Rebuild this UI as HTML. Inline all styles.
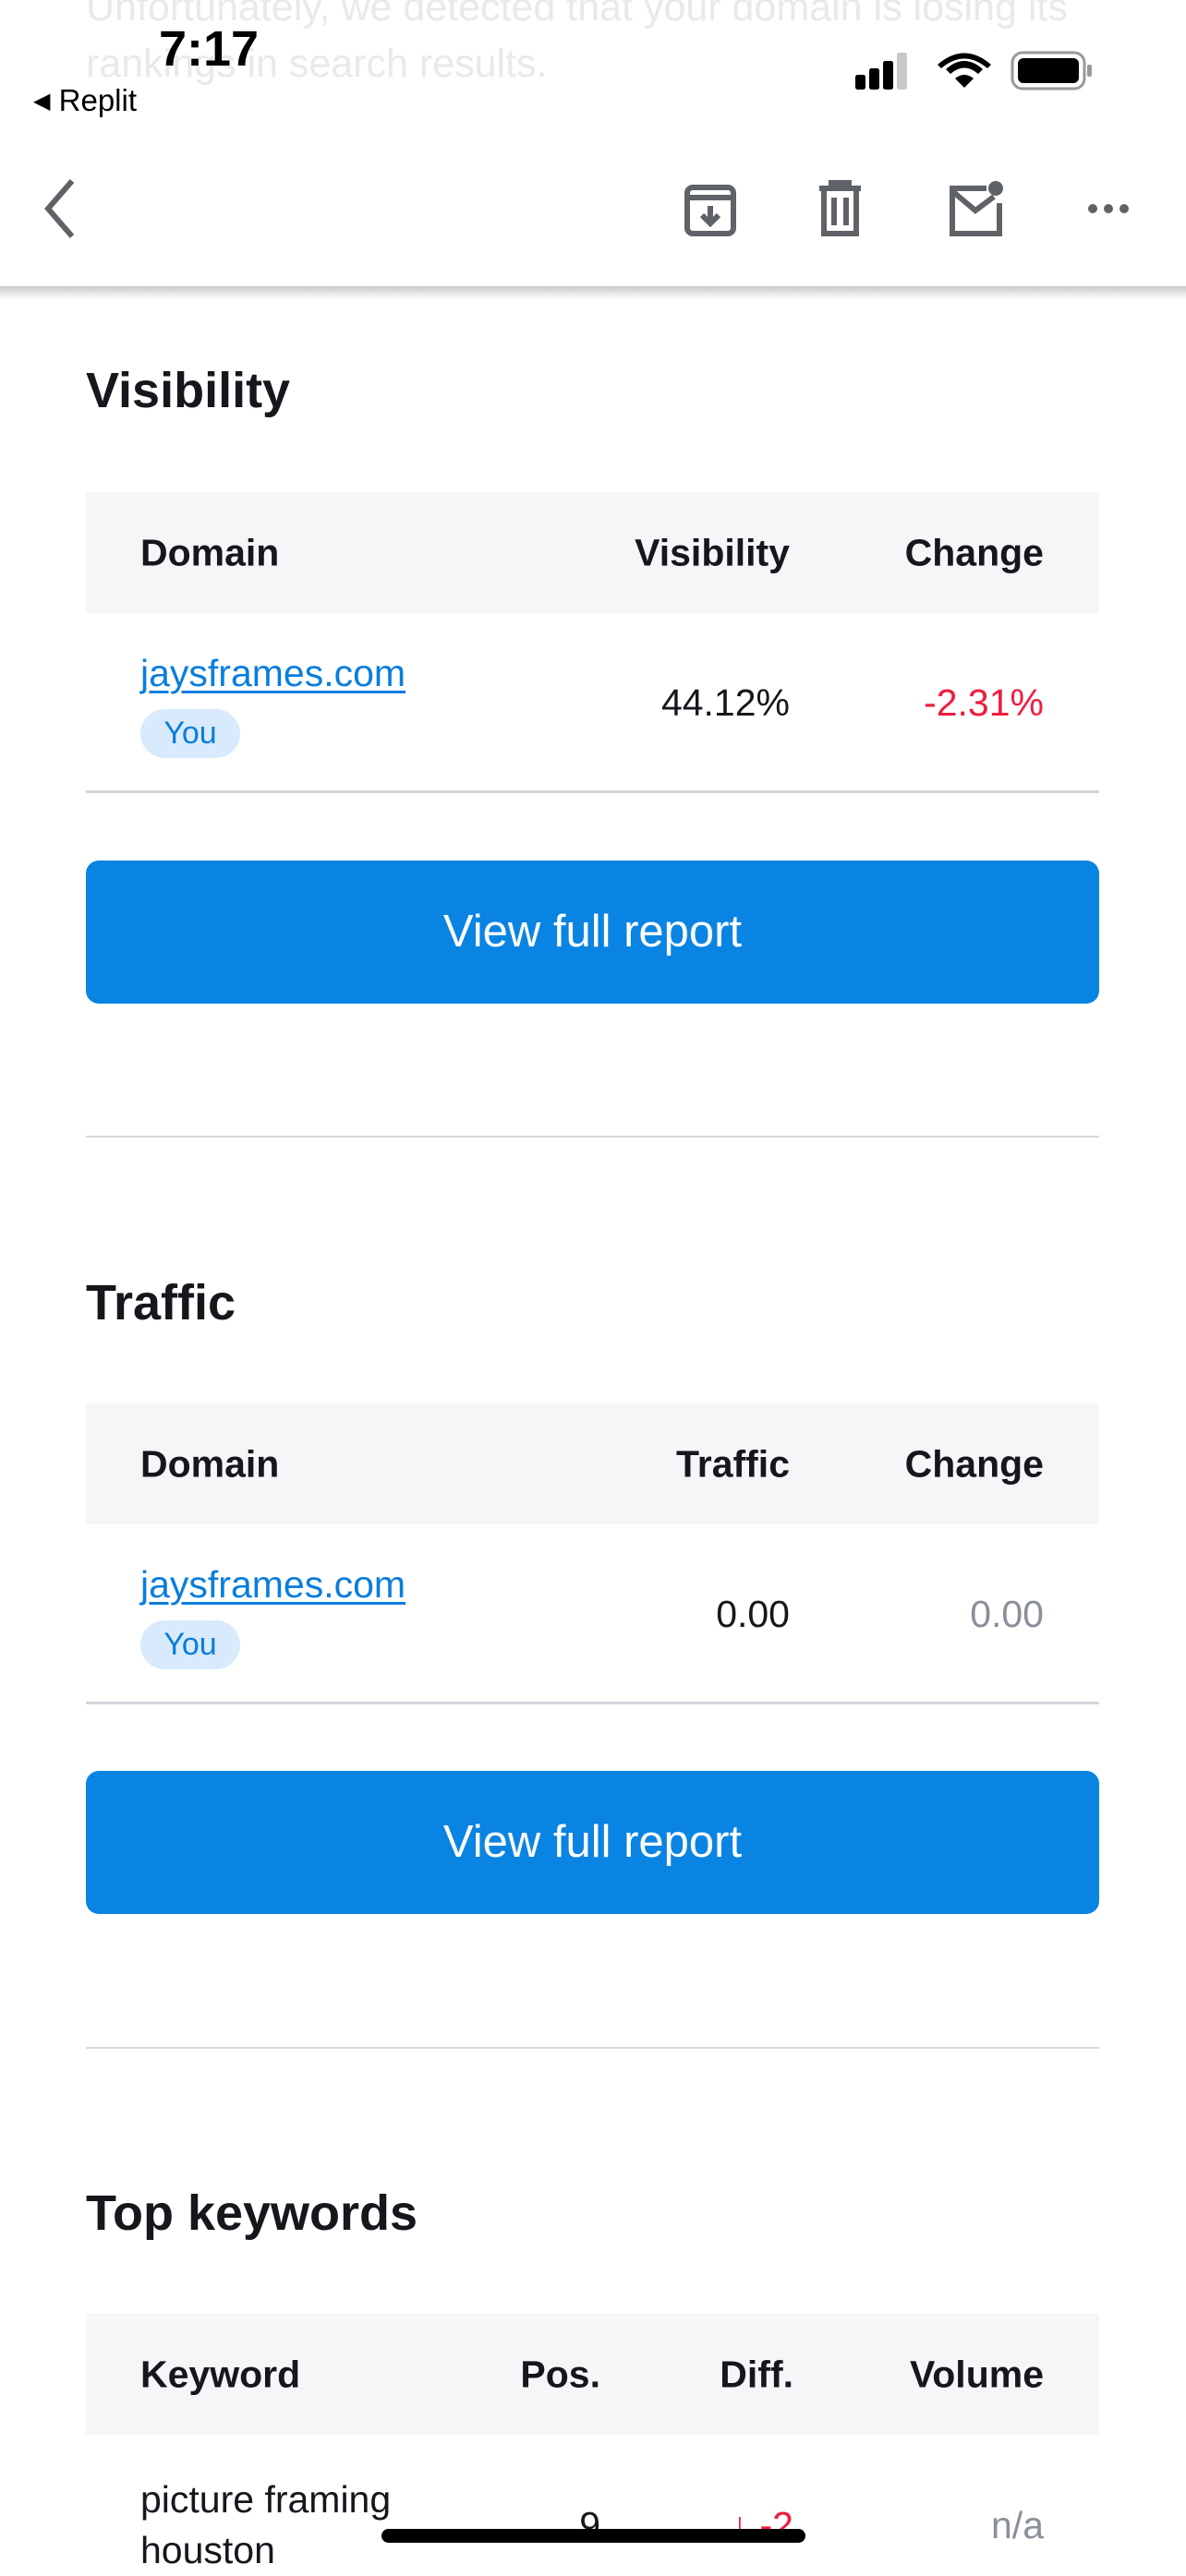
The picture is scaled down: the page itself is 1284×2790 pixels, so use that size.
<!DOCTYPE html>
<html><head><meta charset="utf-8"><style>
*{margin:0;padding:0;box-sizing:border-box}
body{width:1284px;height:2778px;overflow:hidden;background:#fff;font-family:"Liberation Sans",Arial,sans-serif;color:#15171c;position:relative}
.a{position:absolute}
.faded{color:#e9e9eb;font-size:43px;left:93px;white-space:nowrap}
h2{position:absolute;left:93px;font-size:54px;font-weight:bold;color:#15171c}
.th{position:absolute;left:93px;width:1097px;height:131px;background:#f5f6f8}
.th span{position:absolute;top:50%;transform:translateY(-50%);font-size:41px;font-weight:bold}
.r{position:absolute;text-align:right;font-size:41px}
.link{position:absolute;left:152px;font-size:41px;color:#0a7ddc;text-decoration:underline;text-decoration-thickness:3px;text-underline-offset:5px}
.badge{position:absolute;left:152px;width:108px;height:53px;border-radius:27px;background:#d8eafb;color:#0a7ddc;font-size:34px;text-align:center;line-height:53px}
.line{position:absolute;left:93px;width:1097px;height:3px;background:#d3d6dc}
.btn{position:absolute;left:93px;width:1097px;height:155px;border-radius:14px;background:#0984e3;color:#fff;font-size:49px;text-align:center;line-height:155px}
.div{position:absolute;left:93px;width:1097px;height:2px;background:#d6d8de}
</style></head><body>
<div class="a faded" style="top:-16px">Unfortunately, we detected that your domain is losing its</div>
<div class="a faded" style="top:45px">rankings in search results.</div>

<div class="a" style="top:310px;left:0;width:1284px;height:14px;background:linear-gradient(#c8c8c8,rgba(255,255,255,0))"></div>

<div class="a" style="left:172px;top:22px;font-size:54px;font-weight:bold;color:#000">7:17</div>
<div class="a" style="left:36px;top:90px;font-size:33px;color:#000"><span style="font-size:24px;position:relative;top:-3px">◀</span> Replit</div>
<svg class="a" style="left:922px;top:55px" width="270" height="44" viewBox="0 0 270 44">
<rect x="4" y="26" width="11" height="16" rx="2.5" fill="#000"/>
<rect x="19" y="19" width="11" height="23" rx="2.5" fill="#000"/>
<rect x="34" y="11" width="11" height="31" rx="2.5" fill="#000"/>
<rect x="49" y="2" width="11" height="40" rx="2.5" fill="#c8c8c8"/>
<path d="M122 40 L112 30 Q122 22 132 30 Z" fill="#000"/>
<path d="M107 25 Q122 12 137 25 L142 20 Q122 2 102 20 Z" fill="#000"/>
<path d="M97 15 Q122 -6 147 15 L151 11 Q122 -14 93 11 Z" fill="#000" transform="translate(0,4)"/>
<rect x="174" y="2" width="78" height="39" rx="11" fill="none" stroke="#999" stroke-width="3"/>
<rect x="180" y="8" width="66" height="27" rx="6" fill="#000"/>
<rect x="255" y="15" width="5" height="13" rx="2" fill="#999"/>
</svg>

<svg class="a" style="left:0;top:180px" width="1284" height="90" viewBox="0 0 1284 90" fill="none" stroke="#5f6368" stroke-width="6">
<path d="M78 16 L52 46 L78 76"/>
<rect x="744" y="23" width="50" height="50" rx="6"/>
<path d="M744 34 H794"/>
<path d="M769 43 V62 M760 53 L769 62 L778 53"/>
<path d="M887 24 H932 M900 24 V18 H919 V24 M892 24 V73 H927 V24 M903 34 V64 M916 34 V64"/>
<path d="M1082 40 V73 H1031 V24 H1068"/>
<path d="M1031 27 L1056 48 L1076 33"/>
<circle cx="1078" cy="24" r="8" fill="#5f6368" stroke="none"/>
<circle cx="1183" cy="46" r="5" fill="#5f6368" stroke="none"/>
<circle cx="1200" cy="46" r="5" fill="#5f6368" stroke="none"/>
<circle cx="1217" cy="46" r="5" fill="#5f6368" stroke="none"/>
</svg>

<h2 style="top:392px">Visibility</h2>
<div class="th" style="top:533px"><span style="left:59px">Domain</span><span style="right:335px">Visibility</span><span style="right:60px">Change</span></div>
<div class="link" style="top:706px">jaysframes.com</div>
<div class="badge" style="top:768px">You</div>
<div class="r" style="right:429px;top:738px">44.12%</div>
<div class="r" style="right:154px;top:738px;color:#ee1d3e">-2.31%</div>
<div class="line" style="top:856px"></div>
<div class="btn" style="top:932px">View full report</div>
<div class="div" style="top:1230px"></div>

<h2 style="top:1380px">Traffic</h2>
<div class="th" style="top:1520px"><span style="left:59px">Domain</span><span style="right:335px">Traffic</span><span style="right:60px">Change</span></div>
<div class="link" style="top:1693px">jaysframes.com</div>
<div class="badge" style="top:1755px">You</div>
<div class="r" style="right:429px;top:1725px">0.00</div>
<div class="r" style="right:154px;top:1725px;color:#8a8f99">0.00</div>
<div class="line" style="top:1843px"></div>
<div class="btn" style="top:1918px">View full report</div>
<div class="div" style="top:2217px"></div>

<h2 style="top:2366px">Top keywords</h2>
<div class="th" style="top:2506px"><span style="left:59px">Keyword</span><span style="right:540px">Pos.</span><span style="right:331px">Diff.</span><span style="right:60px">Volume</span></div>
<div class="a" style="left:152px;top:2680px;font-size:41px;line-height:55px">picture framing<br>houston</div>
<div class="r" style="right:634px;top:2712px">9</div>
<div class="r" style="right:425px;top:2712px;color:#ee1d3e"><b>↓</b> -2</div>
<div class="r" style="right:154px;top:2712px;color:#8a8f99">n/a</div>
<div class="a" style="left:413px;top:2739px;width:459px;height:15px;border-radius:8px;background:#000"></div>
</body></html>
